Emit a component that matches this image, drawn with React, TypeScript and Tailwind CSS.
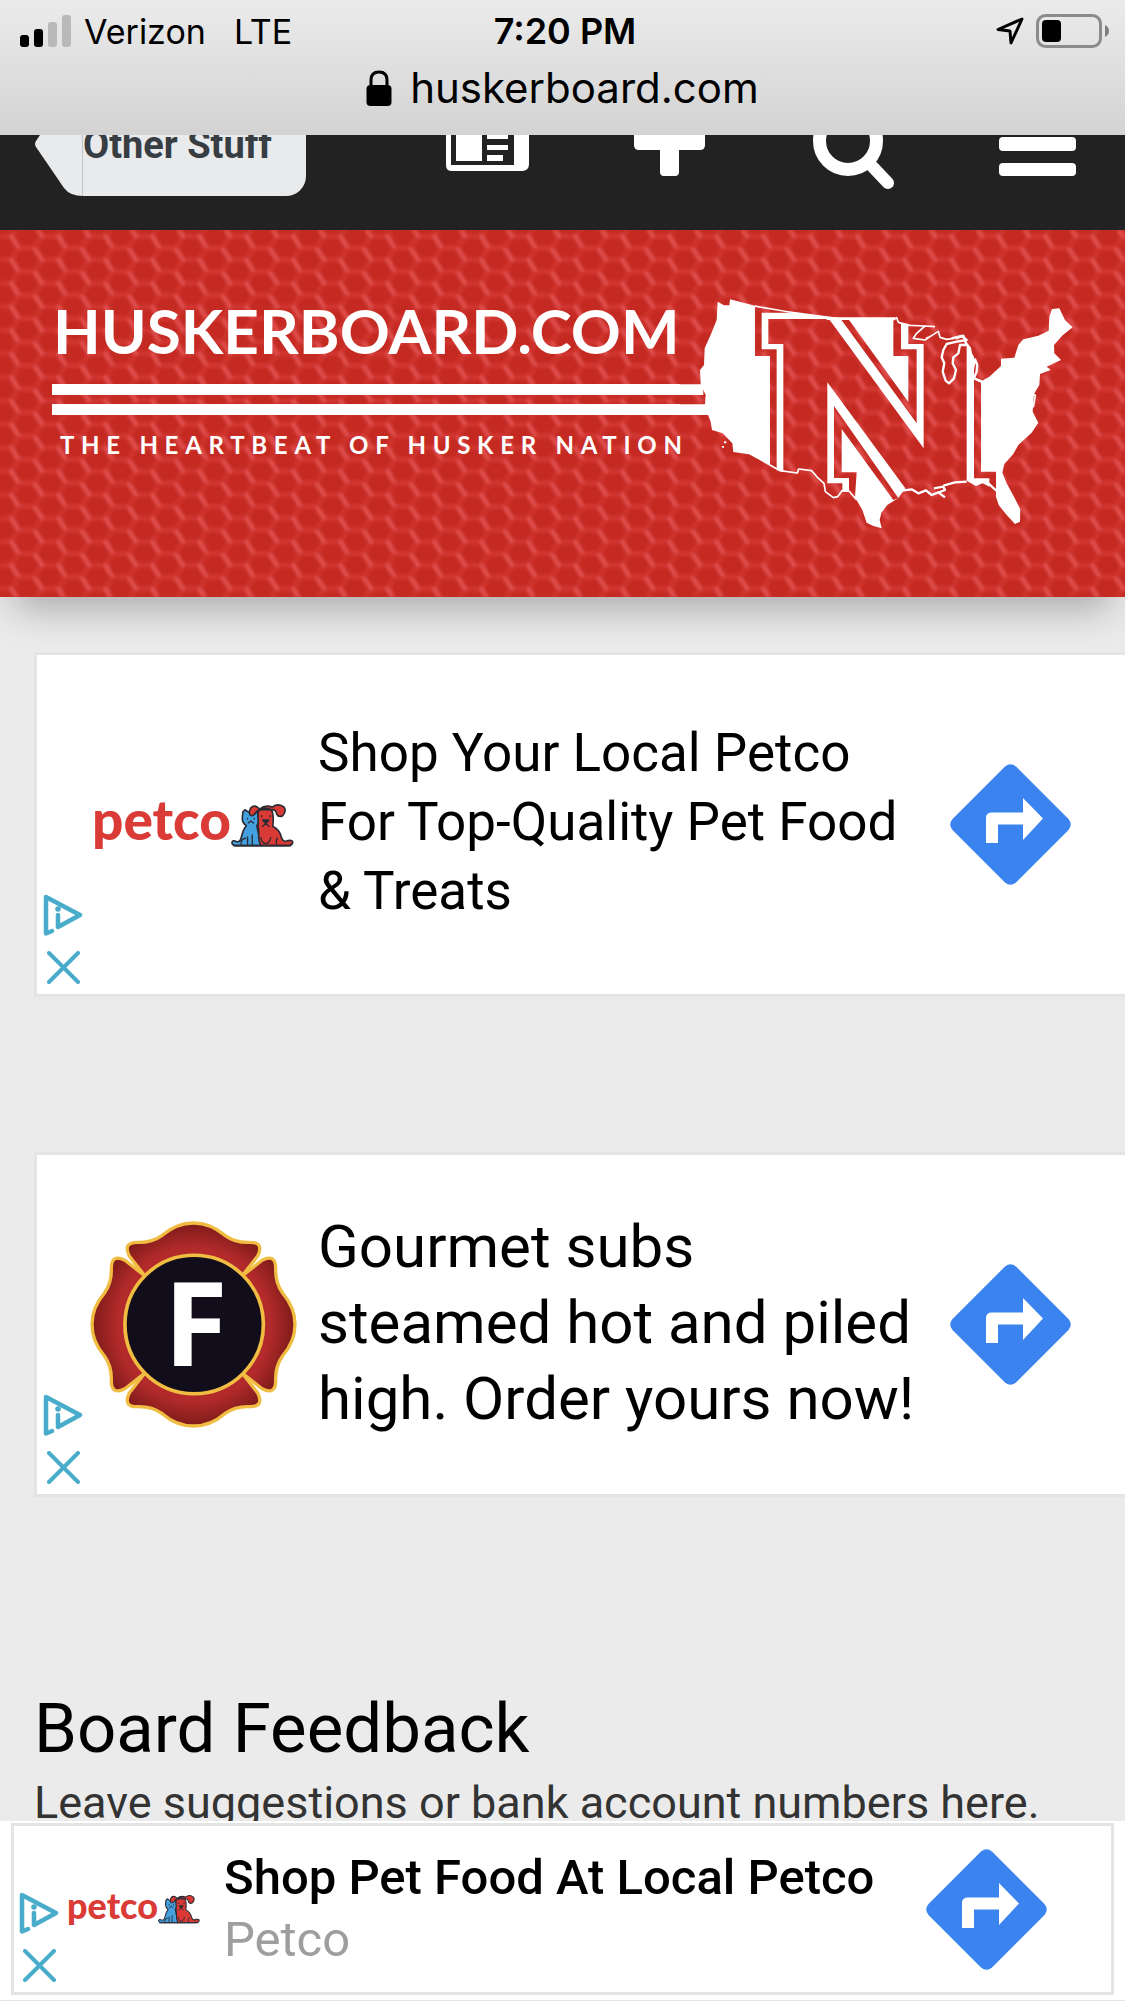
import React, {useEffect} from 'react';

function StatusBar() {
  return (
    <div className="h-[135px] shrink-0 bg-linear-to-b from-[#ebebeb] to-[#d3d3d3] font-['Inter',sans-serif] text-black">
      <div className="grid grid-cols-3 items-center h-[62px] pl-5 pr-[15px] text-[34px]">
        <div className="flex items-center gap-3">
          <svg width="52" height="32" viewBox="0 0 52 32" aria-label="Signal">
            <rect x="0" y="20" width="9" height="12" rx="3"/>
            <rect x="14" y="14" width="9" height="18" rx="3"/>
            <rect x="28" y="7" width="9" height="25" rx="3" fill="#b9b9b9"/>
            <rect x="42" y="0" width="9" height="32" rx="3" fill="#b9b9b9"/>
          </svg>
          <span>Verizon</span>
          <span className="ml-4">LTE</span>
        </div>
        <div className="text-center text-4xl font-semibold">7:20 PM</div>
        <div className="flex items-center justify-end gap-3">
          <svg width="28" height="28" viewBox="0 0 28 28" fill="none" stroke="black" strokeWidth="3" strokeLinejoin="round">
            <path d="M26 2 L2 12.500 L14 14 L15 26 Z"/>
          </svg>
          <svg width="74" height="34" viewBox="0 0 74 34" aria-label="Battery">
            <rect x="1.500" y="1.500" width="63" height="31" rx="8" fill="none" stroke="#8b8b8b" strokeWidth="3"/>
            <rect x="6" y="6" width="19" height="22" rx="4"/>
            <path d="M69 11 Q73 13 73 17 Q73 21 69 23 Z" fill="#7d7d7d"/>
          </svg>
        </div>
      </div>
      <div className="flex items-center justify-center gap-[18px] h-[52px]">
        <svg width="26" height="36" viewBox="0 0 26 36">
          <path d="M5 17 V10 Q5 2 13 2 Q21 2 21 10 V17" fill="none" stroke="black" strokeWidth="3"/>
          <rect x="0.500" y="15" width="25" height="21" rx="4"/>
        </svg>
        <span className="text-[42px] leading-[52px]">huskerboard.com</span>
      </div>
    </div>
  );
}

function NavBar() {
  return (
    <header className="flex items-start h-[95px] shrink-0 overflow-hidden bg-[#222222] pl-[35px] pr-[49px]">
      <a href="#other-stuff" className="flex h-[61px] font-['Roboto',sans-serif]">
        <svg width="48" height="61" viewBox="0 0 48 61">
          <path d="M5 0 L1 6 Q-1 9 1 12 L29 53 Q35 61 48 61 V0 Z" fill="#e8eaec"/>
          <path d="M47.500 0 V61" stroke="#c3c5c7"/>
        </svg>
        <span className="w-[223px] overflow-hidden rounded-br-[20px] bg-[#e8eaec]">
          <span className="block -mt-2 text-[38px] leading-9 font-bold text-[#373d43]">Other Stuff</span>
        </span>
      </a>
      <nav className="flex flex-1 items-start justify-between ml-[140px]">
        <button type="button" aria-label="News">
          <svg width="83" height="60" viewBox="0 0 83 60" className="block">
            <path d="M0 0 H83 V29 Q83 36 76 36 H6 Q0 36 0 30 Z" fill="white"/>
            <rect x="5" y="-4" width="63" height="34" fill="#222222"/>
            <path d="M10 0 H36 V26 H10 Z M41 0 H62 V4 H41 Z M41 10 H62 V15 H41 Z M41 20 H57 V26 H41 Z" fill="white"/>
          </svg>
        </button>
        <button type="button" aria-label="Create">
          <svg width="71" height="60" viewBox="0 0 71 60" className="block" fill="white">
            <path d="M0 0 H71 V10 Q71 15 66 15 H45 V37 Q45 41 41 41 H30 Q26 41 26 37 V15 H5 Q0 15 0 10 Z"/>
          </svg>
        </button>
        <button type="button" aria-label="Search">
          <svg width="83" height="60" viewBox="0 0 83 60" className="block" fill="none" stroke="white">
            <circle cx="37" cy="6" r="28.500" strokeWidth="13"/>
            <path d="M58 28 L77 48" strokeWidth="12" strokeLinecap="round"/>
          </svg>
        </button>
        <button type="button" aria-label="Menu">
          <svg width="77" height="60" viewBox="0 0 77 60" className="block" fill="white">
            <rect y="2" width="77" height="14" rx="4"/>
            <rect y="28" width="77" height="13" rx="4"/>
          </svg>
        </button>
      </nav>
    </header>
  );
}

function UsaLogo() {
  return (
    <svg width="400" height="280" viewBox="0 0 1200 840" className="shrink-0" fill="white">
      <path d="M0 343 H70 V375 H0 Z M0 403 H85 V435 H0 Z"/>
      {/* west coast */}
      <path d="M113 95 L132 106 L148 106 L150 88 L225 107 V258 H270 V588 L235 568 L207 553 L160 546 L157 520 L128 490 L96 480 L92 455 L85 437 L75 403 L77 375 L62 343 L60 300 L72 285 L74 235 L94 190 L110 150 Z"/>
      {/* outline of the N */}
      <path d="M225 106 L318 122 L480 144 L710 460 V238 H663 V158 L685 166 V222 H731 V535 L447 147 H265 V222 H310 V606 L290 600 V238 H245 V128 H330 L225 111 Z"/>
      <path d="M505 147 H640 V258 H685 V396 Z M440 142 H645 V150 H440 Z"/>
      <path d="M442 337 L676 655 L655 684 L462 408 V624 H507 V665 H487 V640 H442 Z"/>
      <path d="M485 477 L640 690 L655 684 L622 705 L604 728 L599 750 L605 775 L580 768 L560 758 L547 720 L525 682 L530 607 H485 Z"/>
      <path d="M860 222 L882 260 V625 H928 L928 650 L908 640 L888 648 L860 632 Z"/>
      {/* east coast */}
      <path d="M885 330 L905 333 L928 320 L963 288 L963 266 L1003 263 L1015 225 L1030 208 L1075 197 L1106 182 L1108 140 L1116 117 L1138 115 L1155 150 L1178 172 L1148 196 L1122 225 L1123 250 L1143 270 L1100 290 L1112 300 L1080 312 L1078 345 L1062 372 L1058 425 L1075 458 L1055 488 L1015 525 L1000 552 L973 582 L967 608 L980 640 L1002 680 L1021 718 L1020 755 L1005 762 L980 735 L956 705 L948 680 V605 H903 V338 Z"/>
      <g fill="none" stroke="white" strokeWidth="5" strokeLinejoin="round">
        <path d="M270 585 L300 602 L352 609 L356 597 L395 602 L412 622 L432 640 L436 665 L460 683 L473 680 L486 662 L507 663 L530 690"/>
        <path d="M665 662 L695 658 L715 670 L738 661 L755 675 L775 667 L795 682 M762 655 L790 650 L795 660 L775 668 M790 647 L825 637 L860 635 M925 640 L950 663" strokeWidth="7"/>
        <path d="M640 150 L650 143 L655 157 L690 166 L735 168 L710 190 L700 205 L735 210 L750 200 L775 184 L780 202 L800 208 L820 205 M735 168 L765 170 M750 200 L738 205"/>
        <path d="M815 205 L845 198 L860 210 L830 215 L800 222 L790 240 L785 262 L793 280 L788 305 L797 332 L807 340 L822 325 L828 300 L818 280 L820 262 L835 250 L840 225 L860 225" strokeWidth="7"/>
        <path d="M828 205 L850 197 L858 220 L870 235 L875 268 L884 272 L880 292 M884 265 L892 285 L890 305 L882 325 L905 334" strokeWidth="7"/>
        <path d="M1040 362 L1042 385 L1055 415 M1055 370 L1066 376 L1060 412 M1080 300 L1108 298"/>
      </g>
      <path d="M126 528 h6 v5 h-6 Z M132 514 h7 v6 h-7 Z"/>
    </svg>
  );
}

function Banner() {
  return (
    <div className="relative z-10 h-[367px] shrink-0 bg-[#c42a22] shadow-[0_26px_36px_-14px_rgba(0,0,0,0.28)]">
      <svg className="absolute inset-0 w-full h-full">
        <defs>
          <filter id="soften" x="0" y="0" width="1" height="1">
            <feGaussianBlur stdDeviation="1.400"/>
          </filter>
          <pattern id="hex" x="15" y="18" width="47" height="23.500" patternUnits="userSpaceOnUse">
            <g fill="none" strokeLinecap="round">
              <g stroke="#d93a38" strokeOpacity="0.45" strokeWidth="6">
                <path d="M-3.500 11.750 L3.500 23.500 H19.500 L27 11.750 H43.500 L50.500 0 M19.500 0 L27 11.750 M43.500 11.750 L50.500 23.500 M-3.500 11.750 L3.500 0 H19.500"/>
              </g>
              <path d="M4 23.500 H19 M4 0 H19 M28 11.750 H43" stroke="#d9403e" strokeWidth="2" strokeOpacity="0.6"/>
              <path d="M-3.500 11.750 L3.500 23.500 M19.500 0 L27 11.750 M43.500 11.750 L50.500 23.500" stroke="#e55a5a" strokeWidth="4" strokeOpacity="0.8"/>
            </g>
          </pattern>
        </defs>
        <rect width="100%" height="100%" fill="url(#hex)" filter="url(#soften)"/>
      </svg>
      <div className="relative flex pl-[52px] pt-10 font-['Lato',sans-serif] text-white">
        <div className="w-[628px] shrink-0 whitespace-nowrap pt-6">
          <h1 className="pl-px text-[62px] leading-[72px] font-bold">HUSKERBOARD.COM</h1>
          <div className="mt-[18px] h-[11px] bg-white"/>
          <div className="mt-[9px] h-[11px] bg-white"/>
          <p className="pl-2 mt-3 text-2xl leading-9 font-bold tracking-[0.28em]">THE HEARTBEAT OF HUSKER NATION</p>
        </div>
        <UsaLogo/>
      </div>
    </div>
  );
}

function Pets({className}: { className: string }) {
  return (
    <svg viewBox="0 0 190 132" className={className} stroke="#2b2b33" strokeWidth="5" strokeLinejoin="round" strokeLinecap="round">
      <path d="M36 26 L42 20 L54 28 H66 L78 20 L84 50 Q84 62 78 68 L90 128 H12 Q2 126 3 118 Q6 110 16 116 Q28 120 32 100 Q36 80 46 68 Q34 60 34 46 Z" fill="#45a0e0"/>
      <path d="M82 70 V50 Q80 30 84 20 H122 Q130 34 126 70 Q148 82 152 104 Q158 120 172 113 Q188 110 186 120 Q182 129 168 128 H90 Q82 112 84 92 Z" fill="#d93a35"/>
      <path d="M86 18 Q72 2 60 14 Q52 28 58 36 Q66 42 74 30 Q78 22 86 22 Q104 10 122 20 Q136 18 138 34 Q144 44 156 38 Q168 24 160 12 Q144 -2 124 12 Q104 4 86 18 Z" fill="#d93a35"/>
      <path d="M50 46 V48 M70 46 V48 M60 54 L52 60 M60 54 L68 60 M92 38 V41 M118 38 V41 M105 62 L95 70 M105 62 L115 70 M50 102 V124 M64 96 V126 M90 104 Q94 122 104 122 M120 104 Q116 122 104 122 M140 106 Q134 114 138 124 M30 124 Q30 108 44 106" fill="none" strokeWidth="4"/>
      <path d="M96 51 H114 L105 62 Z" fill="#2b2b33"/>
      <path d="M8 128 H180" fill="none"/>
    </svg>
  );
}

function SubsEmblem() {
  const petal = 'M225 225 L178 165 Q158 124 202 124 Q245 126 277 103 Q320 66 371 66 Q422 66 465 103 Q497 126 540 124 Q584 124 564 165 L517 225 Z';
  return (
    <svg viewBox="60 60 622 622" className="block w-[207px] h-[207px]">
      <defs>
        <radialGradient id="flame" gradientUnits="userSpaceOnUse" cx="371" cy="371" r="310">
          <stop offset="0.740" stopColor="#b32a2b"/>
          <stop offset="1" stopColor="#7a1a18"/>
        </radialGradient>
      </defs>
      <g fill="url(#flame)" stroke="#f0bd42" strokeWidth="10" strokeLinejoin="round">
        <path d={petal}/>
        <path d={petal} transform="rotate(90 371 371)"/>
        <path d={petal} transform="rotate(180 371 371)"/>
        <path d={petal} transform="rotate(270 371 371)"/>
      </g>
      <circle cx="373" cy="371" r="208" fill="#110d1b" stroke="#f0bd42" strokeWidth="11"/>
      <text x="378" y="496" textAnchor="middle" fill="white" fontSize="350" fontWeight="bold" fontFamily="Open Sans, sans-serif">F</text>
    </svg>
  );
}

function AdControls() {
  return (
    <div className="flex flex-col items-center gap-[15px] w-10 shrink-0">
      <button type="button" aria-label="AdChoices">
        <svg width="40" height="42" viewBox="0 0 40 42" className="block" fill="none" stroke="#4aaccb" strokeWidth="5" strokeLinejoin="round" strokeLinecap="round">
          <path d="M9 37 L3 39.500 V3 L37 21 L15 33 V21" strokeWidth="4.500"/>
          <circle cx="15" cy="15" r="2.800" fill="#4aaccb" stroke="none"/>
        </svg>
      </button>
      <button type="button" aria-label="Close ad">
        <svg width="33" height="33" viewBox="0 0 33 33" className="block" stroke="#4aaccb" strokeWidth="4" strokeLinecap="round">
          <path d="M2 2 L31 31 M31 2 L2 31"/>
        </svg>
      </button>
    </div>
  );
}

function DirectionsButton() {
  return (
    <button type="button" aria-label="Directions" className="shrink-0">
      <svg width="121" height="121" viewBox="0 0 121 121" className="block">
        <path d="M55 2.500 Q60.500 -2 66 2.500 L118.500 55 Q123 60.500 118.500 66 L66 118.500 Q60.500 123 55 118.500 L2.500 66 Q-2 60.500 2.500 55 Z" fill="#3b84ef"/>
        <path d="M36 79 V54 Q36 48.500 42 48.500 H73 V34 L93 54.500 L73 76 V60.500 H48 V79 Z" fill="white"/>
      </svg>
    </button>
  );
}

export default function App() {
  useEffect(() => {
    document.title = "Board Feedback - HuskerBoard.com";
  }, []);

  return (
    <div className="flex flex-col h-screen overflow-hidden bg-[#ebebeb] font-['Roboto',sans-serif] text-black">
      <StatusBar/>
      <NavBar/>
      <Banner/>
      <main className="flex-1 min-h-0 overflow-hidden pl-[34px] pt-[55px]">
        <section className="flex h-[345px] border-3 border-r-0 border-[#e4e4e4] bg-white pl-[6px] pr-[54px]">
          <div className="flex items-end pb-[10px]"><AdControls/></div>
          <div className="flex items-center w-[207px] shrink-0 ml-[7px] pl-[2px]">
            <span className="pb-3 font-['Lato',sans-serif] text-[55px] leading-[54px] font-black text-[#da3b36]">petco</span>
            <Pets className="w-[63px] h-[44px]"/>
          </div>
          <p className="flex-1 self-center ml-[21px] pb-1 text-[53px] leading-[69px] whitespace-nowrap">
            Shop Your Local Petco<br/>For Top-Quality Pet Food<br/>&amp; Treats
          </p>
          <div className="flex items-center"><DirectionsButton/></div>
        </section>

        <section className="flex h-[345px] mt-[155px] border-3 border-r-0 border-[#e4e4e4] bg-white pl-[6px] pr-[54px]">
          <div className="flex items-end pb-[10px]"><AdControls/></div>
          <div className="flex items-center w-[207px] shrink-0 ml-[7px]"><SubsEmblem/></div>
          <p className="flex-1 self-center ml-[21px] pb-1 text-[60px] leading-[76px] whitespace-nowrap">
            Gourmet subs<br/>steamed hot and piled<br/>high. Order yours now!
          </p>
          <div className="flex items-center"><DirectionsButton/></div>
        </section>

        <h2 className="mt-[192px] text-[69px] leading-[80px]">Board Feedback</h2>
        <p className="mt-[6px] text-[45px] leading-[56px] text-[#333333] whitespace-nowrap">
          Leave suggestions or bank account numbers here.
        </p>
      </main>

      <footer className="h-[180px] shrink-0 border-b border-[#e4e4e4] bg-white px-[11px] pt-[2px]">
        <div className="flex h-[172px] border-3 border-[#e4e4e4] pl-[5px] pr-16">
          <div className="flex items-end pb-[10px]"><AdControls/></div>
          <div className="flex items-center w-[140px] shrink-0 ml-2">
            <span className="pb-2 font-['Lato',sans-serif] text-4xl font-black text-[#da3b36]">petco</span>
            <Pets className="w-[42px] h-[30px]"/>
          </div>
          <div className="flex-1 self-center ml-[17px] text-[49px] leading-[62px] whitespace-nowrap">
            <div className="font-medium">Shop Pet Food At Local Petco</div>
            <div className="text-[#9e9e9e]">Petco</div>
          </div>
          <div className="flex items-center"><DirectionsButton/></div>
        </div>
      </footer>
    </div>
  );
}
